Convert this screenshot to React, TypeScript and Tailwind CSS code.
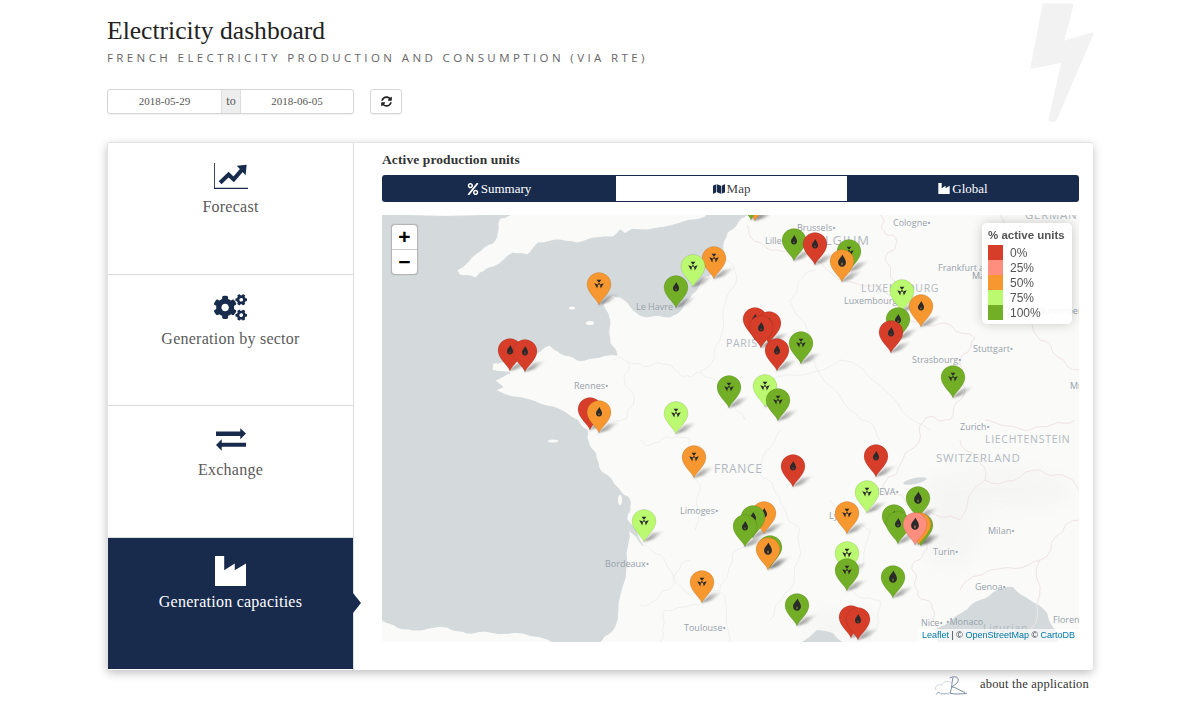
import React from "react";
import { FaCogs, FaMap, FaPercent, FaSyncAlt } from "react-icons/fa";

const C: Record<string, string> = { r: "#d63e2a", o: "#f69730", g: "#72af26", l: "#bbf970", p: "#ff8e7f" };

type P = [number, number, string, "n" | "f" | "b" | ""];
const pins: P[] = [
  [755, 221, "o", ""], [751, 220, "g", ""],
  [599, 305, "o", "n"], [714, 279, "o", "n"], [693, 287, "l", "n"], [676, 308, "g", "f"],
  [510, 371, "r", "f"], [525, 372, "r", "f"],
  [590, 430, "r", ""], [599, 433, "o", "f"], [676, 434, "l", "n"],
  [729, 408, "g", "n"],
  [794, 261, "g", "f"], [815, 265, "r", "f"], [849, 272, "g", "n"], [842, 282, "o", "b"],
  [921, 327, "o", "f"], [902, 312, "l", "n"], [898, 340, "g", "f"], [891, 353, "r", "f"],
  [755, 340, "r", "f"], [769, 344, "r", "f"], [761, 348, "r", "f"], [777, 371, "r", "f"], [801, 364, "g", "n"],
  [765, 407, "l", "n"], [778, 421, "g", "n"], [953, 398, "g", "n"],
  [694, 478, "o", "n"], [644, 542, "l", "n"], [702, 603, "o", "n"],
  [793, 487, "r", "f"], [876, 477, "r", "f"], [867, 513, "l", "n"], [847, 534, "o", "n"],
  [764, 534, "o", "f"], [753, 538, "g", "f"], [745, 547, "g", "f"],
  [770, 568, "g", ""], [768, 570, "o", "b"],
  [847, 574, "l", "n"], [847, 591, "g", "n"], [893, 598, "g", "b"], [797, 626, "g", "b"],
  [851, 638, "r", ""], [858, 640, "r", "f"],
  [918, 519, "g", "b"], [894, 537, "g", "f"], [898, 544, "g", "f"],
  [921, 546, "g", ""], [919, 545, "o", ""], [915, 545, "p", "b"],
];

type L = [string, number, number, number?, string?];
const labels: L[] = [
  ["Cologne•", 893, 222], ["Brussels•", 797, 227], ["Lille", 765, 240], ["BELGIUM", 808, 240, 13, "c"],
  ["Frankfurt am", 938, 267], ["Main", 972, 275], ["LUXEMBOURG", 861, 288, 10.5, "c"], ["Luxembourg", 844, 300],
  ["Le Havre", 636, 306], ["Rennes•", 574, 385], ["PARIS", 726, 343, 10.5, "c"], ["Stuttgart•", 973, 348],
  ["Strasbourg•", 912, 359], ["Zurich•", 960, 426], ["LIECHTENSTEIN", 985, 439, 10.5, "c"], ["SWITZERLAND", 936, 458, 11.5, "c"],
  ["FRANCE", 714, 469, 12, "c"], ["Limoges•", 680, 510], ["Bordeaux•", 605, 563], ["Toulouse•", 684, 627],
  ["GENEVA•", 861, 491], ["Milan•", 988, 530], ["Turin•", 933, 551], ["Lyon", 829, 515], ["Genoa•", 975, 586],
  ["Nice•", 921, 622], ["•Monaco", 946, 621], ["Florence", 1053, 619], ["Ligurian", 983, 628, 10.5, "c"],
  ["Munich", 1070, 385], ["GERMANY", 1025, 215, 11.5, "c"], ["Nuremberg", 1038, 310],
];

const legend: [string, string][] = [["0%", "bg-[#d63e2a]"], ["25%", "bg-[#ff8e7f]"], ["50%", "bg-[#f69730]"], ["75%", "bg-[#bbf970]"], ["100%", "bg-[#72af26]"]];

const PIN = "M0,0 C-1.5,-5 -12,-12.5 -12,-20.5 A12,12 0 1 1 12,-20.5 C12,-12.5 1.5,-5 0,0Z";
const FLAME = "M0.3,-5 C1.2,-2.8 3,-1.4 3,1.1 A3,3.4 0 0 1 -3,1.1 C-3,-0.7 -1.8,-1.6 -1.2,-2.6 C-0.6,-3.4 -0.1,-4 0.3,-5Z";

function wob(d: string, amp: number, levels: number, closed = false) {
  let pts = (d.match(/-?[\d.]+,-?[\d.]+/g) || []).map((s) => s.split(",").map(Number));
  let seed = pts[0][0] * 0.37 + pts[0][1] * 0.71;
  for (let l = 0; l < levels; l++) {
    const next: number[][] = [];
    pts.forEach((p, i) => {
      next.push(p);
      const q = pts[i + 1];
      if (!q) return;
      const dx = q[0] - p[0];
      const dy = q[1] - p[1];
      const len = Math.hypot(dx, dy) || 1;
      seed += 1.7;
      const k = Math.sin(seed * 12.9898) * amp * Math.min(1, len / 14);
      next.push([(p[0] + q[0]) / 2 - (dy / len) * k, (p[1] + q[1]) / 2 + (dx / len) * k]);
    });
    pts = next;
    amp *= 0.6;
  }
  return "M" + pts.map((p) => p[0].toFixed(1) + "," + p[1].toFixed(1)).join(" L") + (closed ? "Z" : "");
}

function sector(a: number, half: number, r0: number, r1: number) {
  const pt = (r: number, d: number) => {
    const t = ((a + d) * Math.PI) / 180;
    return `${(r * Math.cos(t)).toFixed(2)},${(r * Math.sin(t)).toFixed(2)}`;
  };
  return `M${pt(r0, -half * 0.45)} L${pt(r1, -half)} L${pt(r1, half)} L${pt(r0, half * 0.45)}Z`;
}

function Marker({ p }: { p: P }) {
  const [x, y, c, i] = p;
  return (
    <g transform={`translate(${x} ${y})`}>
      <path d={PIN} fill={C[c]} stroke="#000" strokeOpacity={0.12} strokeWidth={0.8} />
      {i === "n" && (
        <g transform="translate(0 -21)" fill="#2a2a2a">
          <path d={sector(-90, 30, 1.5, 4.8)} />
          <path d={sector(30, 38, 1.5, 4.8)} />
          <path d={sector(150, 38, 1.5, 4.8)} />
          <circle r={0.9} />
        </g>
      )}
      {(i === "f" || i === "b") && (
        <g transform={`translate(0 -21) scale(${i === "b" ? 1.3 : 1})`}>
          <path d={FLAME} fill="#2a2a2a" />
          <ellipse cx={0} cy={2.3} rx={0.8} ry={1.1} fill={C[c]} opacity={0.55} />
        </g>
      )}
    </g>
  );
}

const SEA = "382,215 510,215 500,218 498,230 493,243 477,253 457,270 460,275 475,278 480,273 493,267 513,253 527,255 538,243 560,240 577,243 593,238 613,237 620,230 647,230 680,223 700,219 707,215 747,215 738,222 727,233 723,250 713,273 700,282 690,297 683,307 670,317 647,317 633,310 620,297 613,295 603,305 610,323 610,343 617,355 593,358 577,360 560,353 550,345 537,353 523,363 513,360 493,363 492,370 510,373 495,380 503,387 495,390 513,397 530,400 553,407 577,420 587,430 587,438 593,450 597,460 603,473 617,487 628,497 630,510 627,520 643,546 628,530 628,543 627,563 622,587 617,620 610,633 600,642 553,642 523,633 490,632 467,633 447,627 413,630 397,627 382,620";
const MED1 = "802,642 817,630 833,633 842,642";
const MED2 = "937,642 937,628 963,612 980,600 997,590 1013,587 1030,600 1047,613 1055,630 1058,642";

const ROADS = [
  "613,360 628,362 660,363 680,375 700,372 730,395 745,420",
  "628,362 630,390 627,418 600,430",
  "640,440 645,445 668,437 690,440 692,470 700,490 695,530",
  "645,545 670,570 690,595 720,590 732,555 760,540",
  "700,605 665,610 660,642",
  "725,595 730,642",
  "722,250 735,285 720,340 700,372",
  "815,270 790,300 810,350 850,410 880,440",
  "780,430 760,475 780,500 800,530 790,590 770,620",
  "830,500 870,530 850,590 880,600 870,640",
  "770,380 840,360 880,385 930,430",
  "640,605 668,590 690,560",
];
const BORDERS = [
  "747,225 770,250 820,262 860,285 895,300 925,325 975,338 962,375 950,420 920,425 900,465 885,495 915,505 925,540 912,570 925,600 937,625",
  "880,215 893,235 885,260 905,285",
  "985,420 1030,430 1075,420",
  "960,440 985,480 1040,470 1079,490",
  "925,505 960,520 985,480",
  "1000,215 1010,260 1040,340 1079,370",
  "1030,630 1040,560 1079,520",
  "960,590 990,570 1040,560",
];

function MapView() {
  return (
    <div className="relative w-[697px] h-[427px] mt-[13px] overflow-hidden bg-[#fafaf9]">
      <svg className="absolute inset-0 w-full h-full" viewBox="382 215 697 427">
        <filter id="soft"><feGaussianBlur stdDeviation="8" /></filter>
        <g filter="url(#soft)" fill="#f4f4f3" opacity={0.7}>
          <ellipse cx={950} cy={520} rx={30} ry={50} />
          <ellipse cx={1000} cy={490} rx={70} ry={22} />
          <ellipse cx={840} cy={625} rx={35} ry={14} />
        </g>
        <path d={wob(SEA, 1.6, 2, true)} fill="#d4dadc" stroke="#d4dadc" strokeLinejoin="round" strokeWidth={1} />
        <path d={wob(MED1, 1, 1, true)} fill="#d4dadc" />
        <path d={wob(MED2, 1.5, 2, true)} fill="#d4dadc" />
        <ellipse cx={915} cy={481} rx={12} ry={3} fill="#d4dadc" transform="rotate(-12 915 481)" />
        <g fill="#fafaf9">
          <ellipse cx={572} cy={308} rx={3} ry={1.5} />
          <ellipse cx={590} cy={323} rx={4} ry={2} />
          <ellipse cx={553} cy={441} rx={5} ry={1.5} />
          <ellipse cx={620} cy={500} rx={2} ry={5} />
          <ellipse cx={627} cy={575} rx={1} ry={8} />
          <path d="M615,225 L626,221 L640,224 L625,233Z" />
        </g>
        <g fill="none" stroke="#ecedee" strokeWidth={0.9}>
          {ROADS.map((r) => (
            <path key={r} d={wob(r, 5, 3)} />
          ))}
        </g>
        <g fill="none" stroke="#efe4e4" strokeWidth={1}>
          {BORDERS.map((r) => (
            <path key={r} d={wob(r, 6, 3)} />
          ))}
        </g>
      </svg>

      {labels.map(([t, x, y, s, k]) => (
        <span
          key={t}
          className={"absolute whitespace-nowrap font-['Open_Sans',sans-serif] leading-none -translate-y-1/2 " + (k ? "text-[#b2b9c0] font-medium tracking-[0.7px]" : "text-[#98a2ab] font-medium")}
          style={{ left: x - 382, top: y - 215, fontSize: s ?? 9 }}
        >
          {t}
        </span>
      ))}

      <svg className="absolute inset-0 w-full h-full" viewBox="382 215 697 427">
        <filter id="shade" x="-50%" y="-50%" width="200%" height="200%"><feGaussianBlur stdDeviation="1.1" /></filter>
        <linearGradient id="fade" x1="0" y1="0" x2="1" y2="0">
          <stop offset="0" stopColor="#444" stopOpacity={0.75} />
          <stop offset="1" stopColor="#888" stopOpacity={0.1} />
        </linearGradient>
        <g filter="url(#shade)">
          {pins.map((p, i) => (
            <path key={i} transform={`translate(${p[0]} ${p[1]})`} fill="url(#fade)" d="M-1,0 L9,-9 L20,-11 L10,-3Z" />
          ))}
        </g>
        {pins.map((p, i) => (
          <Marker key={i} p={p} />
        ))}
      </svg>

      <div className="absolute left-[9px] top-[9px] w-[27px] rounded-[4px] border border-[#b5b5b5] bg-white overflow-hidden shadow-[0_0_1px_rgba(0,0,0,0.3)] font-['Liberation_Sans',sans-serif] font-bold text-[21px] leading-[24px] text-center text-black">
        <div className="h-[25px] border-b border-[#ccc]">+</div>
        <div className="h-[24px]">−</div>
      </div>

      <div className="absolute left-[600px] top-[8px] w-[90px] h-[101px] rounded-[5px] bg-white/90 shadow-[0_0_12px_rgba(0,0,0,0.2)] px-[6px] py-[5px] font-['Liberation_Sans',sans-serif] text-[12px] text-[#555]">
        <div className="font-bold text-[11.5px] leading-[15px] mb-[2px] whitespace-nowrap">% active units</div>
        {legend.map(([t, c]) => (
          <div key={t} className="flex items-center h-[15px]">
            <span className={"w-[15px] h-[15px] mr-[7px] " + c} />
            <span className="leading-none">{t}</span>
          </div>
        ))}
      </div>

      <div className="absolute right-0 bottom-0 w-[161px] text-center bg-white/70 h-[13px] font-['Liberation_Sans',sans-serif] text-[9px] leading-[13px] text-[#333] whitespace-nowrap">
        <span className="text-[#0078a8]">Leaflet</span> | © <span className="text-[#0078a8]">OpenStreetMap</span> © <span className="text-[#0078a8]">CartoDB</span>
      </div>
    </div>
  );
}

const IconLine = () => (
  <svg className="w-[34px] h-[26px]" viewBox="0 0 100 76" fill="currentColor">
    <path d="M0,0 V75 H100" fill="none" stroke="currentColor" strokeWidth={5} />
    <path d="M18,58 L43,34 L58,48 L82,20" fill="none" stroke="currentColor" strokeWidth={12} />
    <path d="M67,8 L96,5 L93,36Z" />
  </svg>
);
const IconExchange = () => (
  <svg className="w-[30px] h-[23px]" viewBox="0 0 89 67" fill="currentColor">
    <path d="M0,10 H72 V0 L89,16 L72,33 V23 H0Z" />
    <path d="M89,43 H17 V33 L0,50 L17,67 V55 H89Z" />
  </svg>
);
const IconFactory = ({ className }: { className: string }) => (
  <svg className={className} viewBox="0 0 91 88" fill="currentColor">
    <path d="M0,0 H27 V42 L58,22 V42 L91,22 V88 H0Z" />
  </svg>
);

function NavItem({ icon, label, active }: { icon: React.ReactNode; label: string; active?: boolean }) {
  return (
    <div className={"relative h-[131.5px] flex flex-col items-center pt-[15px] text-[16px] tracking-[0.25px] " + (active ? "bg-[#182b4d] text-white font-medium" : "bg-white text-[#5a5a5a] border-b border-[#ddd]")}>
      <div className={"h-[36px] flex items-center justify-center " + (active ? "text-white" : "text-[#182b4d]")}>{icon}</div>
      <div className="mt-[2px] leading-[22px]">{label}</div>
      {active && <span className="absolute left-full top-[55px] border-y-[10px] border-y-transparent border-l-[8px] border-l-[#182b4d]" />}
    </div>
  );
}

function Tab({ icon, label, active, className }: { icon: React.ReactNode; label: string; active?: boolean; className: string }) {
  return (
    <div className={"flex items-center justify-center gap-[2px] h-full " + className + " " + (active ? "bg-white text-[#444] border-y border-[#182b4d]" : "bg-[#182b4d] text-white")}>
      {icon}
      <span>{label}</span>
    </div>
  );
}

export default function App() {
  return (
    <div className="relative w-[1200px] h-[726px] bg-white overflow-hidden font-['Liberation_Serif',serif]">
      <svg className="absolute left-[1025px] top-0 w-[72px] h-[126px]" viewBox="1025 0 72 126">
        <path d="M1044,5 L1072,5 L1062,43 L1092,34 L1055,120 L1050,120 L1063,61 L1032,67Z" fill="#f2f2f2" stroke="#f2f2f2" strokeWidth={3} strokeLinejoin="round" />
      </svg>

      <div className="relative pl-[107px] pt-[15px]">
        <h1 className="text-[25.6px] leading-[32px] text-[#222]">Electricity dashboard</h1>
        <div className="mt-[3px] font-['Open_Sans',sans-serif] text-[11.5px] leading-[16px] tracking-[3.4px] text-[#666] whitespace-nowrap">FRENCH ELECTRICITY PRODUCTION AND CONSUMPTION (VIA RTE)</div>
        <div className="flex items-start mt-[23px]">
          <div className="flex w-[247px] h-[25px] border border-[#d5d5d5] rounded-[3px] text-[11px] leading-[23px] text-[#555] text-center shadow-[0_1px_1px_rgba(0,0,0,0.06)]">
            <div className="w-[113px]">2018-05-29</div>
            <div className="w-[20px] bg-[#eee] border-x border-[#ddd] text-[12px]">to</div>
            <div className="flex-1">2018-06-05</div>
          </div>
          <div className="ml-[16px] w-[32px] h-[25px] border border-[#d5d5d5] rounded-[3px] flex items-center justify-center text-[#222] shadow-[0_1px_1px_rgba(0,0,0,0.06)]">
            <FaSyncAlt className="w-[11px] h-[11px]" />
          </div>
        </div>

        <div className="flex mt-[28px] w-[986px] h-[528px] rounded-[3px] bg-white border-t border-l border-[#e3e3e3] shadow-[0_3px_10px_rgba(0,0,0,0.25)]">
          <div className="w-[246px] shrink-0 border-r border-[#ddd]">
            <NavItem icon={<IconLine />} label="Forecast" />
            <NavItem icon={<FaCogs className="w-[33px] h-[29px]" />} label="Generation by sector" />
            <NavItem icon={<IconExchange />} label="Exchange" />
            <NavItem active icon={<IconFactory className="w-[31px] h-[30px]" />} label="Generation capacities" />
          </div>
          <div className="flex-1 pl-[28px] pt-[9px]">
            <div className="text-[13.5px] leading-[16px] font-bold text-[#333] tracking-[0.1px]">Active production units</div>
            <div className="flex h-[27px] w-[697px] mt-[7px] text-[13px] leading-none rounded-[3px] overflow-hidden">
              <Tab className="w-[234px]" icon={<FaPercent className="w-[12px] h-[12px]" />} label="Summary" />
              <Tab className="w-[231px]" active icon={<FaMap className="w-[12px] h-[12px] text-[#182b4d]" />} label="Map" />
              <Tab className="w-[232px]" icon={<IconFactory className="w-[12px] h-[11px]" />} label="Global" />
            </div>
            <MapView />
          </div>
        </div>

        <div className="flex justify-end items-center w-[982px] h-[28px] text-[12.5px] tracking-[0.2px] text-[#333]">
          <svg className="w-[36px] h-[22px] mr-[11px] mt-[3px]" viewBox="0 0 38 24" fill="none" strokeLinecap="round">
            <path d="M2,16 C1,11 6,10 9,11 C11,6 17,6 20,9" stroke="#c3ccd6" strokeWidth={0.8} />
            <path d="M18,3 C24,0 29,3 26,8 C24,11 21,12 20,13 C24,13 28,17 34,19 M21,3 C20,8 20,14 18,20 C22,21 30,21 36,20" stroke="#5d7690" strokeWidth={0.9} />
            <path d="M3,21 C5,17 7,20 8,21 C10,19 12,22 14,20 C15,21 16,21 17,20" stroke="#7f93a8" strokeWidth={0.9} />
          </svg>
          <span>about the application</span>
        </div>
      </div>
    </div>
  );
}
